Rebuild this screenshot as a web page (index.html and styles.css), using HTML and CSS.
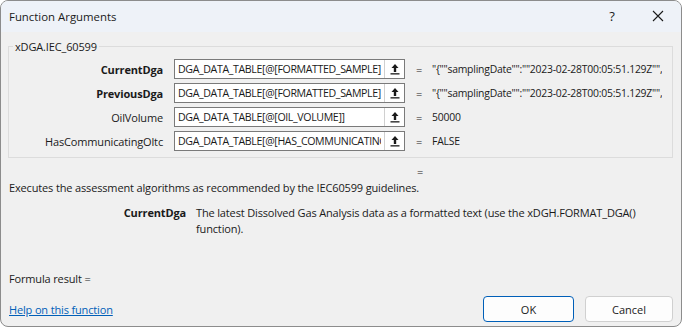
FILE: index.html
```html
<!DOCTYPE html>
<html lang="en">
<head>
    <meta charset="UTF-8">
    <meta name="viewport" content="width=device-width, initial-scale=1.0">
    <title>Function Arguments</title>
    <link rel="stylesheet" href="styles.css">
</head>
<body>
    <div class="window">
        <div class="title-bar">
            <span class="title">Function Arguments</span>
            <div class="title-controls">
                <span class="help-btn">?</span>
                <span class="close-btn">
                    <svg width="12" height="12" viewBox="0 0 12 12"><path d="M1 1 L11 11 M11 1 L1 11" stroke="#1a1a1a" stroke-width="1.1" fill="none"/></svg>
                </span>
            </div>
        </div>

        <div class="content">
            <fieldset class="group">
                <legend>xDGA.IEC_60599</legend>

                <div class="arg-row">
                    <label class="arg-name required">CurrentDga</label>
                    <div class="ref-box">
                        <input type="text" value="DGA_DATA_TABLE[@[FORMATTED_SAMPLE]]">
                        <span class="ref-btn"><svg width="10" height="12" viewBox="0 0 10 12"><path d="M5 1 L1.5 5 H3.8 V9 H6.2 V5 H8.5 Z" fill="#1a1a1a"/><rect x="0.5" y="10.2" width="9" height="1.3" fill="#1a1a1a"/></svg></span>
                    </div>
                    <span class="eq">=</span>
                    <span class="arg-value">"{""samplingDate"":""2023-02-28T00:05:51.129Z"",</span>
                </div>

                <div class="arg-row">
                    <label class="arg-name required">PreviousDga</label>
                    <div class="ref-box">
                        <input type="text" value="DGA_DATA_TABLE[@[FORMATTED_SAMPLE]]">
                        <span class="ref-btn"><svg width="10" height="12" viewBox="0 0 10 12"><path d="M5 1 L1.5 5 H3.8 V9 H6.2 V5 H8.5 Z" fill="#1a1a1a"/><rect x="0.5" y="10.2" width="9" height="1.3" fill="#1a1a1a"/></svg></span>
                    </div>
                    <span class="eq">=</span>
                    <span class="arg-value">"{""samplingDate"":""2023-02-28T00:05:51.129Z"",</span>
                </div>

                <div class="arg-row">
                    <label class="arg-name">OilVolume</label>
                    <div class="ref-box">
                        <input type="text" value="DGA_DATA_TABLE[@[OIL_VOLUME]]">
                        <span class="ref-btn"><svg width="10" height="12" viewBox="0 0 10 12"><path d="M5 1 L1.5 5 H3.8 V9 H6.2 V5 H8.5 Z" fill="#1a1a1a"/><rect x="0.5" y="10.2" width="9" height="1.3" fill="#1a1a1a"/></svg></span>
                    </div>
                    <span class="eq">=</span>
                    <span class="arg-value">50000</span>
                </div>

                <div class="arg-row">
                    <label class="arg-name">HasCommunicatingOltc</label>
                    <div class="ref-box">
                        <input type="text" value="DGA_DATA_TABLE[@[HAS_COMMUNICATING_OLTC]]">
                        <span class="ref-btn"><svg width="10" height="12" viewBox="0 0 10 12"><path d="M5 1 L1.5 5 H3.8 V9 H6.2 V5 H8.5 Z" fill="#1a1a1a"/><rect x="0.5" y="10.2" width="9" height="1.3" fill="#1a1a1a"/></svg></span>
                    </div>
                    <span class="eq">=</span>
                    <span class="arg-value">FALSE</span>
                </div>
            </fieldset>

            <div class="result-eq">=</div>

            <p class="description">Executes the assessment algorithms as recommended by the IEC60599 guidelines.</p>

            <div class="arg-help">
                <span class="arg-help-name">CurrentDga</span>
                <span class="arg-help-text">The latest Dissolved Gas Analysis data as a formatted text (use the xDGH.FORMAT_DGA() function).</span>
            </div>

            <div class="formula-result">Formula result =</div>

            <div class="footer">
                <a href="#" class="help-link">Help on this function</a>
                <div class="buttons">
                    <button class="btn btn-default">OK</button>
                    <button class="btn">Cancel</button>
                </div>
            </div>
        </div>
    </div>
</body>
</html>
```

FILE: styles.css
```css
/* Function Arguments dialog */
:root {
    --dialog-bg: #f0f0f0;
    --title-bg: #eef2f8;
    --text-color: #1a1a1a;
    --accent: #005fb8;
}
* {
    box-sizing: border-box;
}
html, body {
    margin: 0;
    padding: 0;
    background: #ffffff;
}
body {
    font-family: "Open Sans", "Noto Sans", sans-serif;
    font-size: 11px;
    letter-spacing: -0.15px;
    color: var(--text-color);
}
.window {
    width: 682px;
    height: 327px;
    background: var(--dialog-bg);
    border: 1px solid #8c8c8c;
    border-radius: 8px;
    overflow: hidden;
    display: flex;
    flex-direction: column;
}
.title-bar {
    height: 31px;
    background: var(--title-bg);
    display: flex;
    align-items: center;
    justify-content: space-between;
    padding-left: 8px;
    padding-bottom: 1px;
}
.title {
    font-size: 11.4px;
    letter-spacing: 0;
}
.title-controls {
    display: flex;
    align-items: center;
    height: 100%;
}
.help-btn {
    width: 46px;
    text-align: center;
    font-size: 13px;
}
.close-btn {
    width: 46px;
    display: flex;
    justify-content: center;
}
.content {
    flex: 1;
    padding: 7px 8px 0 7px;
    display: flex;
    flex-direction: column;
}
.group {
    margin: 0;
    padding: 5px 6px 6px 0;
    border: 1px solid #dcdcdc;
    border-radius: 0;
    display: flex;
    flex-direction: column;
    gap: 4px;
}
.group legend {
    margin-left: 4px;
    padding: 0 2px;
    font-size: 11px;
}
.arg-row {
    display: flex;
    align-items: center;
    height: 20px;
}
.arg-name {
    width: 154px;
    text-align: right;
}
.arg-name.required {
    font-weight: bold;
}
.ref-box {
    margin-left: 11px;
    width: 231px;
    height: 20px;
    border: 1px solid #7a7a7a;
    background: #ffffff;
    display: flex;
}
.ref-box input {
    flex: 1;
    min-width: 0;
    border: none;
    outline: none;
    padding: 0 3px;
    font-family: inherit;
    font-size: 10.6px;
    letter-spacing: -0.36px;
    color: var(--text-color);
    background: transparent;
}
.ref-btn {
    width: 20px;
    border-left: 1px solid #d0d0d0;
    display: flex;
    align-items: center;
    justify-content: center;
    background: #ffffff;
}
.eq {
    margin-left: 11px;
    width: 16px;
}
.arg-value {
    white-space: nowrap;
    overflow: hidden;
    font-size: 10.4px;
    letter-spacing: -0.22px;
}
.result-eq {
    margin: 6px 0 0 409px;
    height: 14px;
}
.description {
    margin: 2px 0 0 0;
    padding-left: 1px;
}
.arg-help {
    display: flex;
    margin-top: 10px;
    line-height: 16px;
}
.arg-help-name {
    width: 188px;
    flex-shrink: 0;
    text-align: right;
    font-weight: bold;
    padding-right: 10px;
}
.arg-help-text {
    flex: 1;
}
.formula-result {
    margin-top: auto;
    margin-bottom: 6px;
    padding-left: 1px;
}
.footer {
    display: flex;
    align-items: center;
    justify-content: space-between;
    height: 34px;
}
.help-link {
    color: var(--accent);
    padding-left: 1px;
}
.buttons {
    display: flex;
    gap: 11px;
}
.btn {
    width: 91px;
    height: 26px;
    background: #fdfdfd;
    border: 1px solid #d0d0d0;
    border-radius: 4px;
    font-family: inherit;
    font-size: 11px;
    color: var(--text-color);
}
.btn + .btn {
    width: 88px;
}
.btn-default {
    border: 1px solid var(--accent);
}
```
